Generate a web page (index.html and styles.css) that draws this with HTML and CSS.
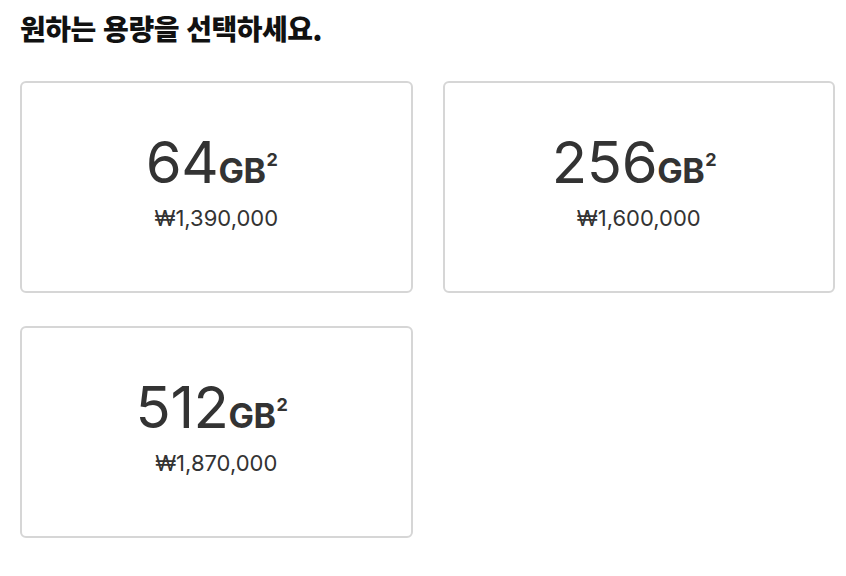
FILE: index.html
```html
<!DOCTYPE html>
<html lang="ko">
<head>
<meta charset="utf-8">
<title>용량 선택</title>
<link rel="stylesheet" href="styles.css">
</head>
<body>
<main class="page">
  <h2 class="title">원하는 용량을 선택하세요.</h2>
  <div class="grid">
    <div class="card">
      <div class="size"><span class="num">64</span><span class="unit">GB</span><sup class="fn">2</sup></div>
      <div class="price">₩1,390,000</div>
    </div>
    <div class="card">
      <div class="size"><span class="num">256</span><span class="unit">GB</span><sup class="fn">2</sup></div>
      <div class="price">₩1,600,000</div>
    </div>
    <div class="card">
      <div class="size"><span class="num">512</span><span class="unit">GB</span><sup class="fn">2</sup></div>
      <div class="price">₩1,870,000</div>
    </div>
  </div>
</main>
</body>
</html>
```
FILE: styles.css
```css
html, body {
  margin: 0;
  padding: 0;
  background: #fff;
}
.page {
  padding: 8px 11px 0 20px;
  font-family: Inter, "Noto Sans CJK KR", sans-serif;
  color: #1d1d1f;
}
.title {
  margin: 0 0 33px 0;
  font-family: "Noto Sans CJK KR", sans-serif;
  font-weight: 900;
  font-size: 28px;
  line-height: 40px;
  letter-spacing: -0.5px;
  color: #111;
}
.grid {
  display: grid;
  grid-template-columns: 1fr 1fr;
  column-gap: 30px;
  row-gap: 33px;
}
.card {
  box-sizing: border-box;
  height: 212px;
  border: 2px solid #d6d6d6;
  border-radius: 6px;
  display: flex;
  flex-direction: column;
  align-items: center;
  justify-content: center;
  color: #333;
  padding-bottom: 10px;
}
.size {
  line-height: 58px;
  white-space: nowrap;
  padding-right: 9px;
}
.num {
  font-size: 58px;
  font-weight: 400;
  letter-spacing: -0.4px;
}
.unit {
  font-size: 34px;
  font-weight: 700;
  letter-spacing: -0.5px;
}
.fn {
  font-size: 18px;
  font-weight: 700;
  vertical-align: 17px;
  line-height: 1;
  margin-left: 1px;
}
.price {
  margin-top: -1px;
  font-size: 22px;
  line-height: 26px;
  color: #333;
}
```
